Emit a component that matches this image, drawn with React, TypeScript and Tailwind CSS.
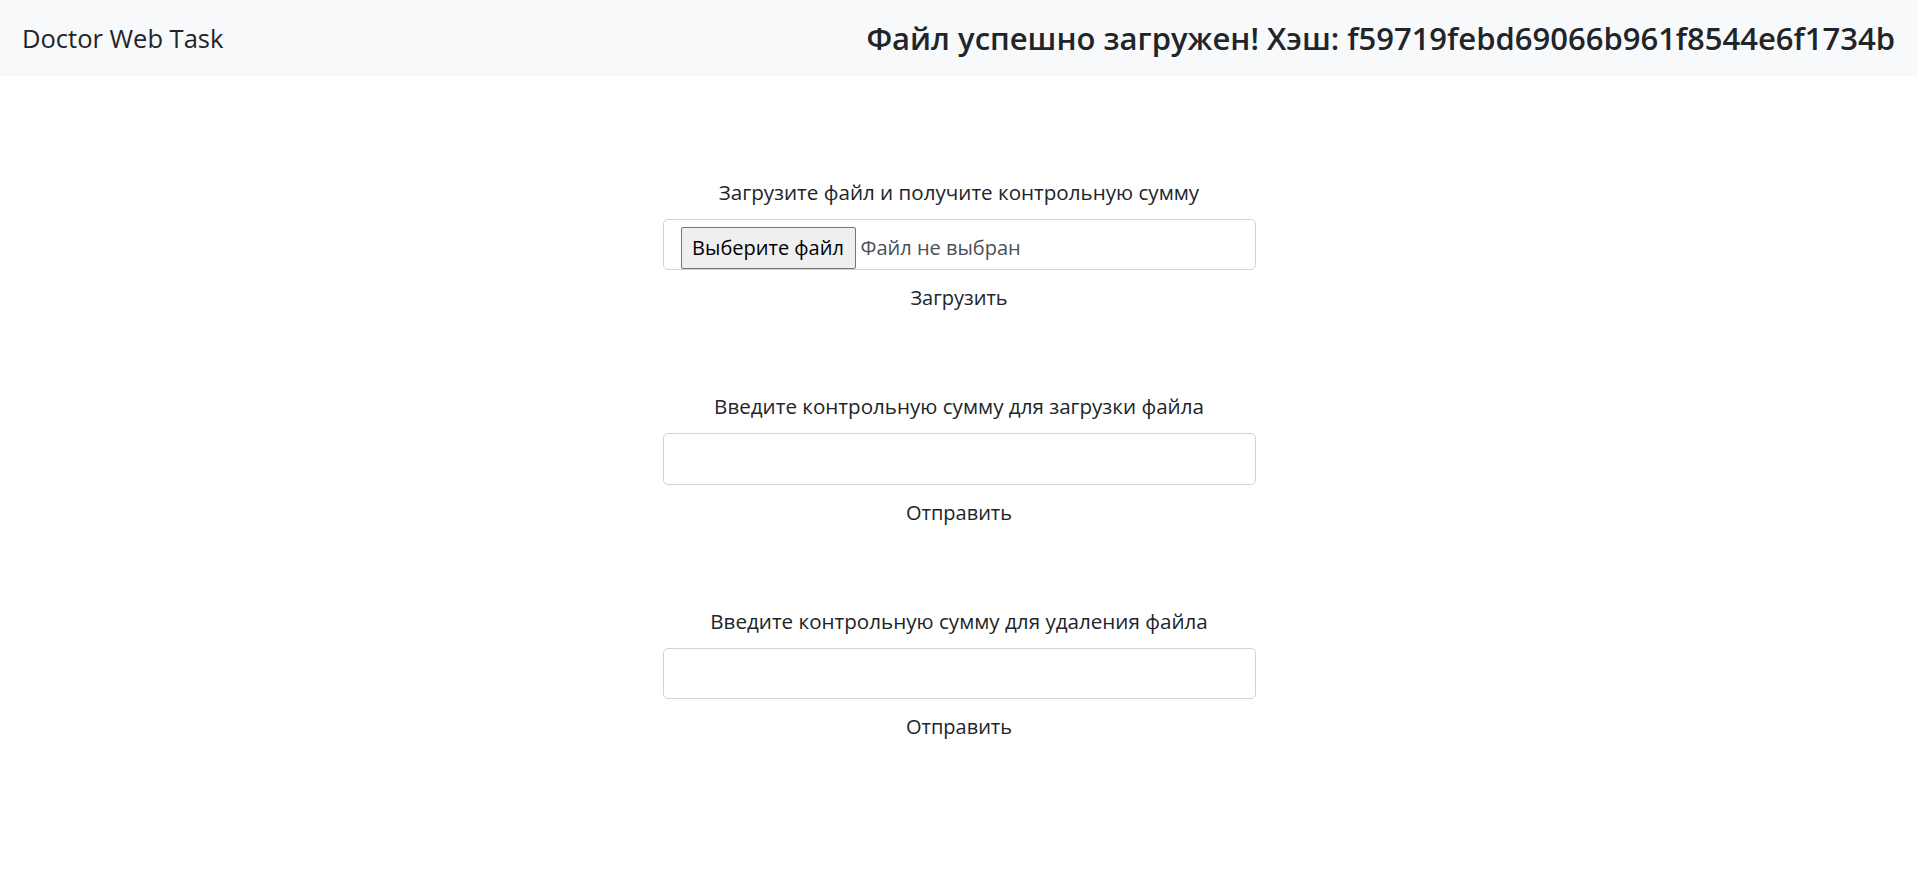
import React from "react";

const font = { fontFamily: '"Open Sans", "Noto Sans", sans-serif' };

function Section({
  label,
  action,
  children,
}: {
  label: string;
  action: string;
  children: React.ReactNode;
}) {
  return (
    <div className="flex w-[593px] flex-col items-center">
      <label className="h-[30px] text-[20.6px] leading-[30px] text-[#212529]">{label}</label>
      <div className="mt-[12px] w-full">{children}</div>
      <button type="button" className="mt-[13px] h-[30px] text-[20px] leading-[30px] text-[#212529]">
        {action}
      </button>
    </div>
  );
}

export default function App() {
  return (
    <div className="min-h-[895px] bg-white" style={font}>
      <nav className="flex h-[76px] items-center justify-between bg-[#f8f9fa] pl-[22px] pr-[23px]">
        <span className="text-[25.5px] text-[#212529]">Doctor Web Task</span>
        <h3 className="text-[31px] font-semibold text-[#212529]">
          Файл успешно загружен! Хэш: f59719febd69066b961f8544e6f1734b
        </h3>
      </nav>

      <main className="flex flex-col items-center gap-[78px] pt-[101px]">
        <Section label="Загрузите файл и получите контрольную сумму" action="Загрузить">
          <div className="flex h-[51px] items-start rounded-[5px] border border-[#ced4da] pl-[17px] pt-[7px]">
            <span className="flex h-[42px] w-[175px] items-center justify-center rounded-[2px] border border-[#767676] bg-[#efefef] text-[20px] text-black">
              Выберите файл
            </span>
            <span className="ml-[5px] flex h-[42px] items-center text-[20px] text-[#495057]">Файл не выбран</span>
          </div>
        </Section>

        <Section label="Введите контрольную сумму для загрузки файла" action="Отправить">
          <input type="text" className="h-[52px] w-full rounded-[5px] border border-[#ced4da] px-3 outline-none" />
        </Section>

        <Section label="Введите контрольную сумму для удаления файла" action="Отправить">
          <input type="text" className="h-[51px] w-full rounded-[5px] border border-[#ced4da] px-3 outline-none" />
        </Section>
      </main>
    </div>
  );
}
